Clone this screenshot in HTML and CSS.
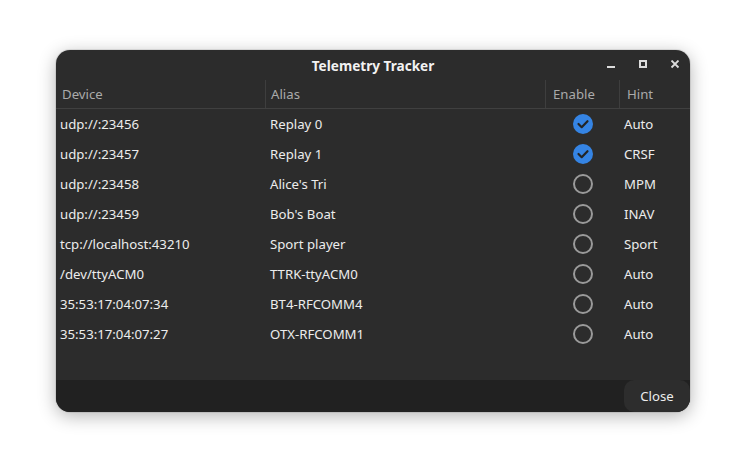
FILE: index.html
```html
<!DOCTYPE html>
<html>
<head>
<meta charset="utf-8">
<link rel="stylesheet" href="styles.css">
</head>
<body>
<div class="window">
  <div class="titlebar">
    <div class="title">Telemetry Tracker</div>
    <div class="controls">
      <svg class="ctl" width="10" height="10" viewBox="0 0 10 10"><rect x="1" y="6" width="8" height="2" fill="#dcdcdc"/></svg>
      <svg class="ctl" width="10" height="10" viewBox="0 0 10 10"><rect x="2" y="1" width="6" height="6" fill="none" stroke="#dcdcdc" stroke-width="2"/></svg>
      <svg class="ctl" width="10" height="10" viewBox="0 0 10 10"><path d="M1.5 0.5 L8.5 7.5 M8.5 0.5 L1.5 7.5" stroke="#dcdcdc" stroke-width="1.8"/></svg>
    </div>
  </div>
  <div class="table">
    <div class="head">
      <div class="hc c1">Device</div>
      <div class="hc c2">Alias</div>
      <div class="hc c3">Enable</div>
      <div class="hc c4">Hint</div>
    </div>
    <div class="row"><div class="c1">udp://:23456</div><div class="c2">Replay 0</div><div class="c3"><span class="chk on"><svg width="20" height="20" viewBox="0 0 20 20"><circle cx="10" cy="10" r="10" fill="#3584e4"/><path d="M5.5 10 L8.7 13.2 L14.5 7.2" fill="none" stroke="#242424" stroke-width="2.2" stroke-linecap="round" stroke-linejoin="round"/></svg></span></div><div class="c4">Auto</div></div>
    <div class="row"><div class="c1">udp://:23457</div><div class="c2">Replay 1</div><div class="c3"><span class="chk on"><svg width="20" height="20" viewBox="0 0 20 20"><circle cx="10" cy="10" r="10" fill="#3584e4"/><path d="M5.5 10 L8.7 13.2 L14.5 7.2" fill="none" stroke="#242424" stroke-width="2.2" stroke-linecap="round" stroke-linejoin="round"/></svg></span></div><div class="c4">CRSF</div></div>
    <div class="row"><div class="c1">udp://:23458</div><div class="c2">Alice's Tri</div><div class="c3"><span class="chk"></span></div><div class="c4">MPM</div></div>
    <div class="row"><div class="c1">udp://:23459</div><div class="c2">Bob's Boat</div><div class="c3"><span class="chk"></span></div><div class="c4">INAV</div></div>
    <div class="row"><div class="c1">tcp://localhost:43210</div><div class="c2">Sport player</div><div class="c3"><span class="chk"></span></div><div class="c4">Sport</div></div>
    <div class="row"><div class="c1">/dev/ttyACM0</div><div class="c2">TTRK-ttyACM0</div><div class="c3"><span class="chk"></span></div><div class="c4">Auto</div></div>
    <div class="row"><div class="c1">35:53:17:04:07:34</div><div class="c2">BT4-RFCOMM4</div><div class="c3"><span class="chk"></span></div><div class="c4">Auto</div></div>
    <div class="row"><div class="c1">35:53:17:04:07:27</div><div class="c2">OTX-RFCOMM1</div><div class="c3"><span class="chk"></span></div><div class="c4">Auto</div></div>
  </div>
  <div class="footer">
    <button class="close">Close</button>
  </div>
</div>
</body>
</html>
```
FILE: styles.css
```css
html, body {
  margin: 0;
  padding: 0;
}
body {
  background: #ffffff;
  font-family: "Noto Sans", "Open Sans", sans-serif;
  font-size: 13.2px;
  color: #ececec;
  padding: 50px 56px 0 56px;
  height: 475px;
  box-sizing: border-box;
}
.window {
  width: 634px;
  height: 362px;
  background: #2c2c2c;
  border-radius: 14px;
  overflow: hidden;
  display: flex;
  flex-direction: column;
  box-shadow: 0 4px 18px rgba(0,0,0,0.30), 0 0 0 1px rgba(0,0,0,0.08);
}
.titlebar {
  height: 30px;
  display: flex;
  align-items: center;
  justify-content: center;
  position: relative;
}
.title {
  font-weight: bold;
  font-size: 13.6px;
  color: #f2f2f2;
}
.controls {
  position: absolute;
  right: 10px;
  top: 10px;
  display: flex;
  gap: 22px;
}
.ctl {
  display: block;
}
.table {
  flex: 1;
}
.head, .row {
  display: grid;
  grid-template-columns: 209px 280px 74px 71px;
}
.head {
  height: 28px;
  border-bottom: 1px solid #404040;
  color: #aaaaaa;
}
.hc {
  display: flex;
  align-items: center;
  padding-left: 6px;
  margin: 0;
}
.hc.c2 {
  border-left: 1px solid #3e3e3e;
  padding-left: 5px;
}
.hc.c3, .hc.c4 {
  border-left: 1px solid #3e3e3e;
  padding-left: 7px;
}
.row {
  height: 30px;
  align-items: center;
}
.row .c1 { padding-left: 4px; }
.row .c2 { padding-left: 5px; }
.row .c3 { display: flex; justify-content: center; padding-left: 2px; }
.row .c4 { padding-left: 5px; }
.chk {
  width: 20px;
  height: 20px;
  box-sizing: border-box;
  border-radius: 50%;
  border: 2px solid #9a9a9a;
  display: block;
}
.chk.on {
  border: none;
}
.chk svg { display: block; }
.footer {
  height: 32px;
  background: #212121;
  display: flex;
  justify-content: flex-end;
}
.close {
  width: 66px;
  height: 32px;
  border: none;
  background: #2d2d2d;
  color: #ececec;
  border-radius: 10px;
  font-family: "Noto Sans", "Open Sans", sans-serif;
  font-size: 13.2px;
  padding: 0;
}
```
